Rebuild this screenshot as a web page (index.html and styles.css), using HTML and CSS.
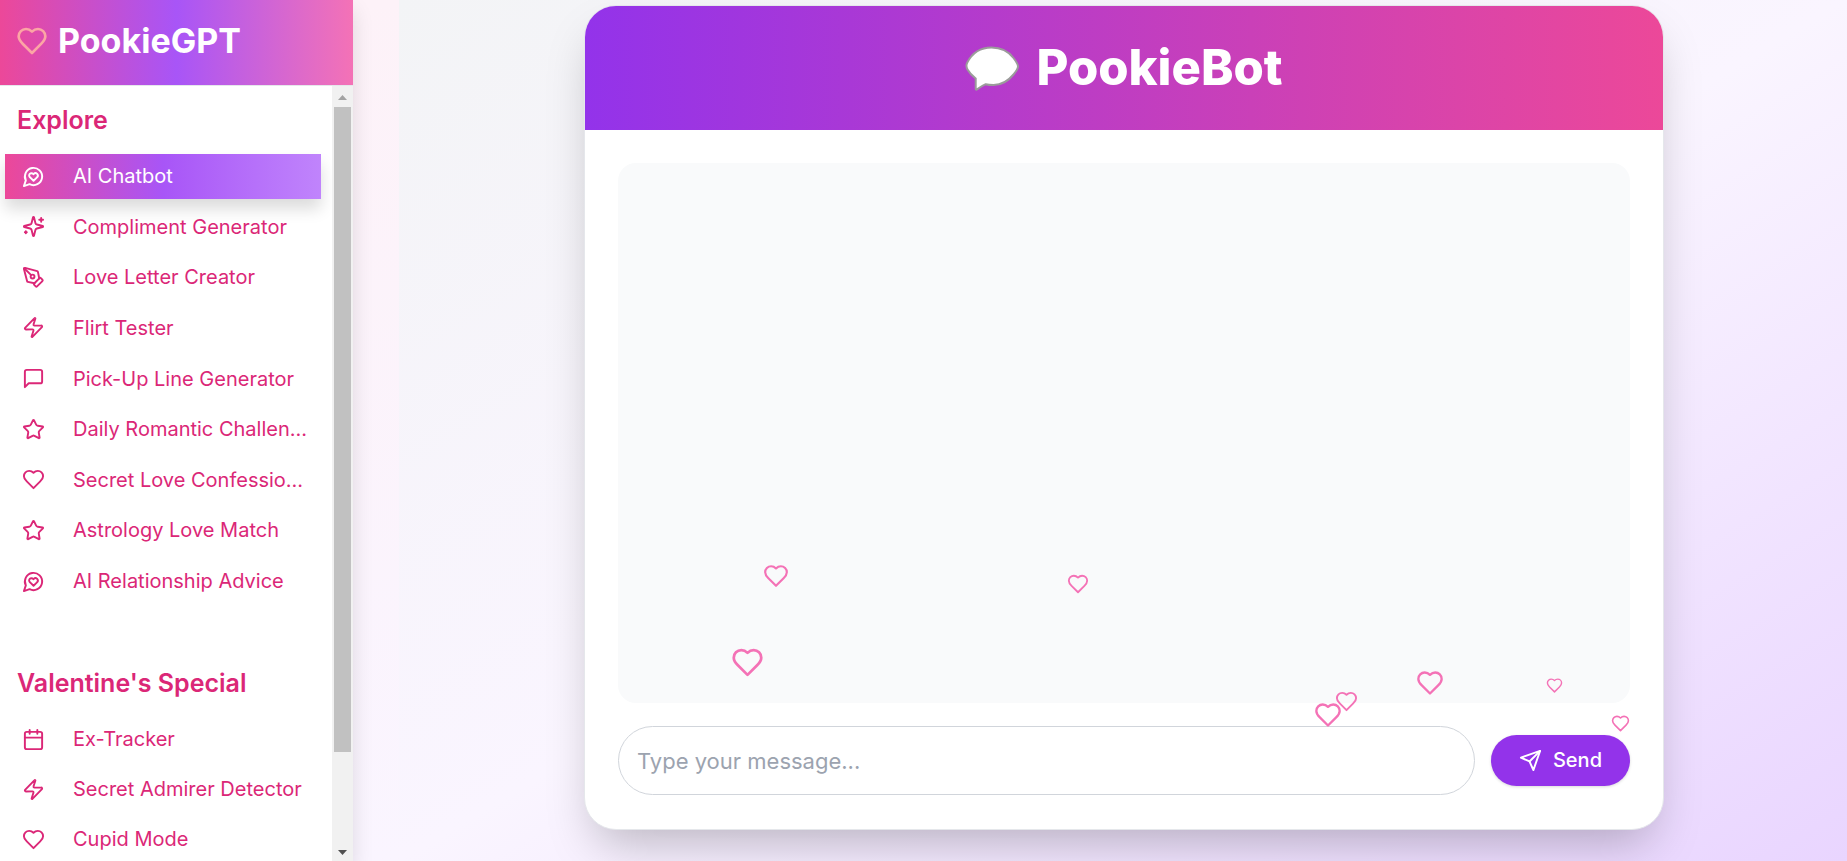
FILE: index.html
```html
<!DOCTYPE html>
<html lang="en">
<head>
<meta charset="utf-8">
<meta name="viewport" content="width=device-width, initial-scale=1">
<title>PookieGPT</title>
<link rel="stylesheet" href="styles.css">
</head>
<body>
<svg class="sprite" aria-hidden="true">
  <symbol id="heart" viewBox="0 0 24 24"><path d="M19 14c1.49-1.46 3-3.21 3-5.5A5.5 5.5 0 0 0 16.5 3c-1.76 0-3 .5-4.5 2-1.5-1.5-2.74-2-4.5-2A5.5 5.5 0 0 0 2 8.5c0 2.3 1.5 4.05 3 5.5l7 7Z"/></symbol>
  <symbol id="chat-heart" viewBox="0 0 24 24"><path d="M7.9 20A9 9 0 1 0 4 16.1L2 22Z"/><path d="M15.8 9.2a2.5 2.5 0 0 0-3.5 0l-.3.4-.35-.3a2.42 2.42 0 1 0-3.2 3.6l3.6 3.5 3.6-3.5c1.2-1.2 1.1-2.7.2-3.7"/></symbol>
  <symbol id="sparkles" viewBox="0 0 24 24"><path d="M9.937 15.5A2 2 0 0 0 8.5 14.063l-6.135-1.582a.5.5 0 0 1 0-.962L8.5 9.936A2 2 0 0 0 9.937 8.5l1.582-6.135a.5.5 0 0 1 .963 0L14.063 8.5A2 2 0 0 0 15.5 9.937l6.135 1.581a.5.5 0 0 1 0 .964L15.5 14.063a2 2 0 0 0-1.437 1.437l-1.582 6.135a.5.5 0 0 1-.963 0z"/><path d="M20 3v4M22 5h-4M4 17v2M5 18H3"/></symbol>
  <symbol id="pen" viewBox="0 0 24 24"><path d="M15.707 21.293a1 1 0 0 1-1.414 0l-1.586-1.586a1 1 0 0 1 0-1.414l5.586-5.586a1 1 0 0 1 1.414 0l1.586 1.586a1 1 0 0 1 0 1.414z"/><path d="m18 13-1.375-6.874a1 1 0 0 0-.746-.776L3.235 2.028a1 1 0 0 0-1.207 1.207L5.35 15.879a1 1 0 0 0 .776.746L13 18"/><path d="m2.3 2.3 7.286 7.286"/><circle cx="11" cy="11" r="2"/></symbol>
  <symbol id="zap" viewBox="0 0 24 24"><path d="M4 14a1 1 0 0 1-.78-1.63l9.9-10.2a.5.5 0 0 1 .86.46l-1.92 6.02A1 1 0 0 0 13 10h7a1 1 0 0 1 .78 1.63l-9.9 10.2a.5.5 0 0 1-.86-.46l1.92-6.02A1 1 0 0 0 11 14z"/></symbol>
  <symbol id="message" viewBox="0 0 24 24"><path d="M21 15a2 2 0 0 1-2 2H7l-4 4V5a2 2 0 0 1 2-2h14a2 2 0 0 1 2 2z"/></symbol>
  <symbol id="star" viewBox="0 0 24 24"><path d="M11.525 2.295a.53.53 0 0 1 .95 0l2.31 4.679a2.123 2.123 0 0 0 1.595 1.16l5.166.756a.53.53 0 0 1 .294.904l-3.736 3.638a2.123 2.123 0 0 0-.611 1.878l.882 5.14a.53.53 0 0 1-.771.56l-4.618-2.428a2.122 2.122 0 0 0-1.973 0L6.396 21.01a.53.53 0 0 1-.77-.56l.881-5.139a2.122 2.122 0 0 0-.611-1.879L2.16 9.795a.53.53 0 0 1 .294-.906l5.165-.755a2.122 2.122 0 0 0 1.597-1.16z"/></symbol>
  <symbol id="calendar" viewBox="0 0 24 24"><path d="M8 2v4M16 2v4M3 10h18"/><rect width="18" height="18" x="3" y="4" rx="2"/></symbol>
  <symbol id="send" viewBox="0 0 24 24"><path d="m22 2-7 20-4-9-9-4Z"/><path d="M22 2 11 13"/></symbol>
</svg>
<div class="app">
  <aside class="sidebar">
    <header class="brand">
      <svg class="icon brand-icon"><use href="#heart"/></svg>
      <span class="brand-name">PookieGPT</span>
    </header>
    <div class="sidebar-body">
      <nav class="nav">
        <h2 class="nav-title">Explore</h2>
        <ul class="nav-list nav-list-main">
          <li><a class="nav-link active" href="#"><svg class="icon"><use href="#chat-heart"/></svg><span class="nav-text">AI Chatbot</span></a></li>
          <li><a class="nav-link" href="#"><svg class="icon"><use href="#sparkles"/></svg><span class="nav-text">Compliment Generator</span></a></li>
          <li><a class="nav-link" href="#"><svg class="icon"><use href="#pen"/></svg><span class="nav-text">Love Letter Creator</span></a></li>
          <li><a class="nav-link" href="#"><svg class="icon"><use href="#zap"/></svg><span class="nav-text">Flirt Tester</span></a></li>
          <li><a class="nav-link" href="#"><svg class="icon"><use href="#message"/></svg><span class="nav-text">Pick-Up Line Generator</span></a></li>
          <li><a class="nav-link" href="#"><svg class="icon"><use href="#star"/></svg><span class="nav-text">Daily Romantic Challen...</span></a></li>
          <li><a class="nav-link" href="#"><svg class="icon"><use href="#heart"/></svg><span class="nav-text">Secret Love Confessio...</span></a></li>
          <li><a class="nav-link" href="#"><svg class="icon"><use href="#star"/></svg><span class="nav-text">Astrology Love Match</span></a></li>
          <li><a class="nav-link" href="#"><svg class="icon"><use href="#chat-heart"/></svg><span class="nav-text">AI Relationship Advice</span></a></li>
        </ul>
        <h2 class="nav-title">Valentine's Special</h2>
        <ul class="nav-list">
          <li><a class="nav-link" href="#"><svg class="icon"><use href="#calendar"/></svg><span class="nav-text">Ex-Tracker</span></a></li>
          <li><a class="nav-link" href="#"><svg class="icon"><use href="#zap"/></svg><span class="nav-text">Secret Admirer Detector</span></a></li>
          <li><a class="nav-link" href="#"><svg class="icon"><use href="#heart"/></svg><span class="nav-text">Cupid Mode</span></a></li>
        </ul>
      </nav>
      <div class="scrollbar" aria-hidden="true">
        <svg class="scroll-arrow scroll-up" viewBox="0 0 21 21"><path d="M6 14h9l-4.500-5z"/></svg>
        <div class="scroll-track"><div class="scroll-thumb"></div></div>
        <svg class="scroll-arrow scroll-down" viewBox="0 0 21 21"><path d="M6 10h9l-4.500 5z"/></svg>
      </div>
    </div>
  </aside>
  <main class="main">
    <section class="card">
      <header class="card-header">
        <svg class="bubble" viewBox="0 0 54 45" aria-hidden="true"><path d="M26.500 1.500C36 1.500 44 6 48.500 12c3 4 4.500 6 4.500 8.500s-1.500 4.500-4.500 8C44 34 36.500 39 28.500 39c-3 0-5.500-.2-7.800-.8-3 1.300-6 3.300-8.700 5.200-.8.500-1.300.2-1.300-.6V32.500C7.500 30 4.500 27 2.500 23.500c-1.300-2.300-1.500-4.500-.2-7C7 7.500 15.500 1.500 26.500 1.500Z"/></svg>
        <h1 class="card-title">PookieBot</h1>
      </header>
      <div class="card-body">
        <div class="messages"></div>
        <form class="composer">
          <input class="composer-input" type="text" placeholder="Type your message..." aria-label="Message">
          <button class="send" type="button"><svg class="icon"><use href="#send"/></svg>Send</button>
        </form>
      </div>
    </section>
  </main>
</div>
<div class="hearts" aria-hidden="true">
  <svg class="icon" style="left:763px;top:563px;width:26px"><use href="#heart"/></svg>
  <svg class="icon" style="left:1067px;top:573px;width:22px"><use href="#heart"/></svg>
  <svg class="icon" style="left:731px;top:646px;width:33px"><use href="#heart"/></svg>
  <svg class="icon" style="left:1416px;top:669px;width:28px"><use href="#heart"/></svg>
  <svg class="icon" style="left:1546px;top:677px;width:17px"><use href="#heart"/></svg>
  <svg class="icon" style="left:1314px;top:701px;width:28px"><use href="#heart"/></svg>
  <svg class="icon" style="left:1335px;top:690px;width:23px"><use href="#heart"/></svg>
  <svg class="icon" style="left:1611px;top:714px;width:19px"><use href="#heart"/></svg>
</div>
</body>
</html>
```
FILE: styles.css
```css
*, *::before, *::after { box-sizing: border-box; }
body {
  margin: 0;
  font-family: Inter, "Liberation Sans", sans-serif;
  background: #fdf2f8;
}
h1, h2, ul { margin: 0; padding: 0; }
ul { list-style: none; }
.sprite { display: none; }
.icon {
  flex: none;
  width: 22px;
  aspect-ratio: 1;
  fill: none;
  stroke: currentColor;
  stroke-width: 2;
  stroke-linecap: round;
  stroke-linejoin: round;
}
.app { display: flex; height: 100vh; overflow: hidden; background: linear-gradient(to bottom, #fdf2f8, #faf5ff); }

.sidebar {
  display: flex;
  flex-direction: column;
  flex: none;
  width: 353px;
  margin-right: 46px;
  background: #fff;
  box-shadow: 0 10px 20px rgba(0, 0, 0, 0.12);
}
.brand {
  display: flex;
  align-items: center;
  gap: 10px;
  padding: 20px 16px 23px;
  border-bottom: 1px solid #e5e7eb;
  background: linear-gradient(to right, #ec4899, #a855f7, #f472b6);
}
.brand-icon { width: 32px; color: #fca5a5; }
.brand-name { font-size: 34px; line-height: 42px; font-weight: 700; color: #fff; }
.sidebar-body { display: flex; flex: 1; min-height: 0; }
.nav { flex: 1; min-width: 0; padding: 0 11px 0 5px; overflow: hidden; }
.nav-title {
  padding: 18px 12px;
  font-size: 25px;
  line-height: 32px;
  font-weight: 600;
  color: #db2777;
}
.nav-list { display: flex; flex-direction: column; justify-content: space-between; gap: 5px; }
.nav-list-main { min-height: 450px; margin-bottom: 45px; }
.nav-link {
  display: flex;
  align-items: center;
  gap: 28px;
  height: 45px;
  padding: 0 17px 1px;
  font-size: 20px;
  line-height: 28px;
  color: #db2777;
  text-decoration: none;
  white-space: nowrap;
}
.nav-link .icon { width: 23px; }
.nav-link.active {
  color: #fff;
  background: linear-gradient(to right, #ec4899, #a855f7, #c084fc);
  box-shadow: 0 10px 16px rgba(0, 0, 0, 0.14);
}
.scrollbar { display: flex; flex-direction: column; flex: none; width: 21px; background: #f1f1f1; }
.scroll-arrow { flex: none; width: 21px; height: 21px; }
.scroll-up { fill: #a3a3a3; }
.scroll-down { fill: #505050; }
.scroll-track { flex: 1; padding: 0 2px; }
.scroll-thumb { height: 88%; background: #c1c1c1; }

.main {
  flex: 1;
  min-width: 0;
  padding: 5px 183px 31px 185px;
  background: linear-gradient(to bottom right, #f3f4f6, #faf5ff, #e9d5ff);
}
.card {
  display: flex;
  flex-direction: column;
  height: 100%;
  border: 1px solid #e5e7eb;
  border-radius: 32px;
  overflow: hidden;
  background: #fff;
  box-shadow: 0 24px 48px -12px rgba(0, 0, 0, 0.25);
}
.card-header {
  display: flex;
  align-items: center;
  justify-content: center;
  gap: 17px;
  padding: 32px;
  color: #fff;
  background: linear-gradient(to right, #9333ea, #ec4899);
}
.bubble { width: 54px; height: 45px; fill: #fff; stroke: #9b9b9b; stroke-width: 2; }
.card-title { font-size: 49px; line-height: 60px; font-weight: 800; }
.card-body { display: flex; flex-direction: column; flex: 1; gap: 23px; padding: 33px 33px 34px; }
.messages { flex: 1; border-radius: 18px; background: #f9fafb; }
.composer { display: flex; align-items: center; gap: 16px; }
.composer-input {
  flex: 1;
  min-width: 0;
  padding: 18px 18px 16px;
  border: 1px solid #d1d5db;
  border-radius: 35px;
  font: 400 22px/33px Inter, "Liberation Sans", sans-serif;
  color: #111827;
  background: #fff;
}
.composer-input::placeholder { color: #9ca3af; opacity: 1; }
.send {
  display: flex;
  align-items: center;
  gap: 11px;
  padding: 11px 28px;
  border: 0;
  border-radius: 26px;
  font: 500 20px/29px Inter, "Liberation Sans", sans-serif;
  color: #fff;
  background: #9333ea;
  box-shadow: 0 1px 3px rgba(0, 0, 0, 0.15);
}
.send .icon { width: 23px; }
.hearts { position: fixed; inset: 0; pointer-events: none; color: #f472b6; }
.hearts .icon { position: absolute; }
```
